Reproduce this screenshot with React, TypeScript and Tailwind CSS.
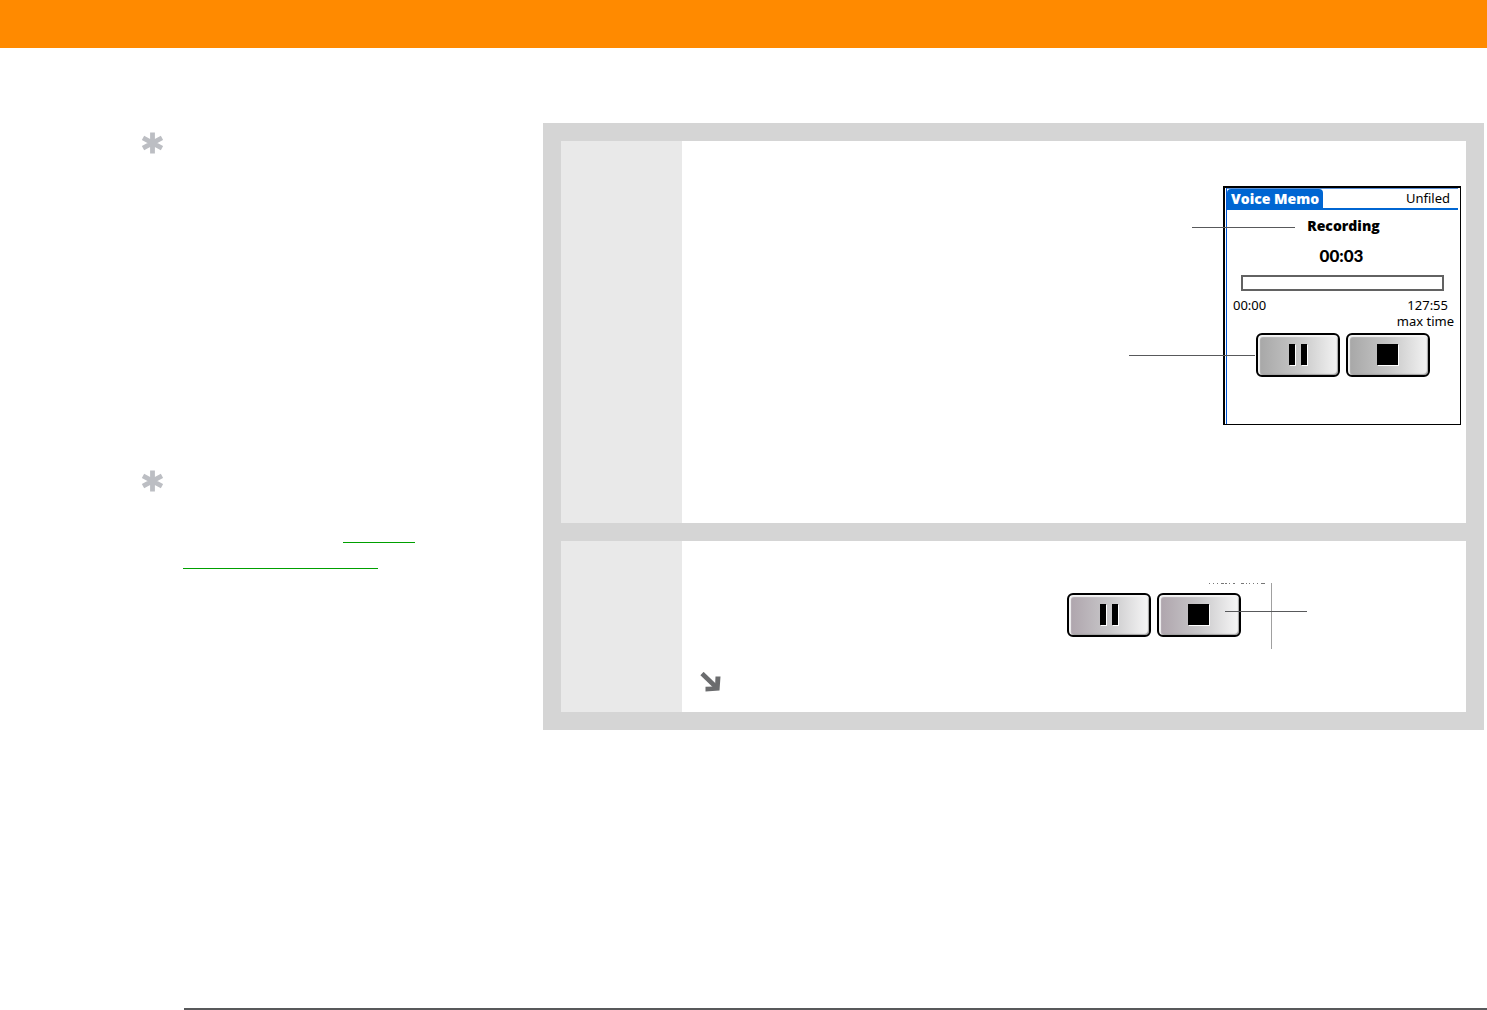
import type { ReactNode } from "react";

function Asterisk() {
  return (
    <svg className="block h-[22px] w-[22px]" viewBox="0 0 22 22" stroke="#bcbec3" strokeWidth="4.8" aria-hidden="true">
      <path d="M11.5 0.5V21.5M2 5.8L21 16.2M21 5.8L2 16.2" fill="none" />
    </svg>
  );
}

function ArrowDownRight() {
  return (
    <svg className="block h-5 w-[22px]" viewBox="0 0 22 20" aria-hidden="true">
      <path d="M2 1.5L17 16" stroke="#6b6c6e" strokeWidth="4.6" fill="none" />
      <path d="M15.5 4.5H20.5L19.5 18.5L5.5 19.5V14.8L15 14.5Z" fill="#6b6c6e" />
    </svg>
  );
}

function DeviceButton({ label, tone, children }: { label: string; tone: string; children: ReactNode }) {
  return (
    <button
      type="button"
      aria-label={label}
      className={`flex h-11 w-[84px] items-center justify-center rounded-md border-2 border-black bg-linear-to-r ${tone} shadow-[inset_1px_1px_1px_1px_#f4f4f4,inset_-1px_-1px_1px_0px_#999]`}
    >
      {children}
    </button>
  );
}

function Controls({ tone }: { tone: string }) {
  return (
    <div className="flex gap-1.5">
      <DeviceButton label="Pause" tone={tone}>
        <svg className="h-[22px] w-5" viewBox="0 0 20 22" shapeRendering="crispEdges" aria-hidden="true">
          <path d="M2 1H8V22H2ZM14 1H20V22H14Z" fill="#fff" />
          <path d="M1 0H7V21H1ZM13 0H19V21H13Z" fill="#000" />
        </svg>
      </DeviceButton>
      <DeviceButton label="Stop" tone={tone}>
        <svg className="h-[22px] w-[22px]" viewBox="0 0 22 22" shapeRendering="crispEdges" aria-hidden="true">
          <path d="M1 1H22V22H1Z" fill="#fff" />
          <path d="M0 0H21V21H0Z" fill="#000" />
        </svg>
      </DeviceButton>
    </div>
  );
}

function VoiceMemo() {
  return (
    <div className="relative h-[239px] w-[238px] border-t-2 border-r border-b border-l-2 border-black bg-white pl-px text-black">
      <div className="h-full border-l border-[#0055d4]">
        <header className="mr-0.5 flex h-[22px] items-start justify-between border-t border-b-2 border-t-[#5c91d8] border-b-[#0066d2]">
          <h1 className="h-5 w-24 rounded-t bg-[#0066d2] pl-1 font-['Open_Sans',sans-serif] text-[14px] leading-5 font-extrabold whitespace-nowrap text-white">
            Voice Memo
          </h1>
          <span className="pr-2 text-[13px] leading-[18px]">Unfiled</span>
        </header>
        <p className="mt-1.5 text-center font-['Open_Sans',sans-serif] text-[14px] leading-5 font-extrabold">Recording</p>
        <p className="mt-2 mr-1 text-center font-['Lato',sans-serif] text-[17px] leading-6 font-black">00:03</p>
        <div className="mt-[7px] mr-4 ml-3.5 h-4 border-2 border-[#626262]" role="progressbar" aria-label="Recording time" aria-valuemin={0} aria-valuemax={7675} aria-valuenow={3} />
        <div className="mt-1.5 flex flex-col text-[13px] leading-4">
          <div className="flex justify-between pr-3 pl-1.5">
            <span>00:00</span>
            <span>127:55</span>
          </div>
          <span className="self-end pr-1.5">max time</span>
        </div>
        <div className="mt-1 pl-[29px]">
          <Controls tone="from-[#a6a6a6] via-[#c6c6c6] to-[#f3f3f3]" />
        </div>
      </div>
      <span className="absolute top-[39px] -left-[33px] h-px w-[103px] bg-[#58595b]" />
      <span className="absolute top-[167px] -left-24 h-px w-[126px] bg-[#58595b]" />
    </div>
  );
}

export default function App() {
  return (
    <div className="flex min-h-screen flex-col bg-white font-['Noto_Sans',sans-serif]">
      <header className="h-12 bg-[#ff8a00]" />
      <main className="flex flex-1 items-start pt-[75px] pr-[3px]">
        <aside className="w-[543px] shrink-0 pt-[9px] pl-[141px]">
          <Asterisk />
          <div className="pt-[316px]">
            <Asterisk />
          </div>
          <nav className="flex w-[274px] flex-col pt-[25px] pl-[42px]">
            <a href="#tip" aria-label="Related topic" className="flex h-[26px] w-[72px] items-end self-end">
              <span className="h-px w-full bg-[#00a000]" />
            </a>
            <a href="#topic" aria-label="Related topic, continued" className="flex h-[26px] w-[195px] items-end">
              <span className="h-px w-full bg-[#00a000]" />
            </a>
          </nav>
        </aside>
        <div className="flex min-w-0 flex-1 flex-col gap-[18px] bg-[#d5d5d5] p-[18px]">
          <section className="flex bg-white">
            <div className="w-[121px] shrink-0 bg-[#e9e9e9]" />
            <div className="flex flex-1 justify-end pt-[45px] pr-[5px] pb-[98px]">
              <VoiceMemo />
            </div>
          </section>
          <section className="flex bg-white">
            <div className="w-[121px] shrink-0 bg-[#e9e9e9]" />
            <div className="flex-1 pt-[42px] pb-5">
              <div className="flex justify-end pr-[194px]">
                <div className="relative h-[66px] w-[205px] border-r border-[#a0a0a0]">
                  <div className="flex justify-end pr-1.5">
                    <svg className="block h-0.5 w-14" viewBox="0 0 56 2" shapeRendering="crispEdges" aria-hidden="true">
                      <path d="M0 .5H1M4 .5H5M8 .5H9M12 .5H15M16 .5H18M20 .5H21M24 .5H26M32 .5H35M37 .5H38M40 .5H41M44 .5H45M48 .5H49M52 .5H56" stroke="#777" />
                    </svg>
                  </div>
                  <div className="pt-2">
                    <Controls tone="from-[#aea4ac] via-[#c8c7c9] to-[#f7f7f7]" />
                  </div>
                  <span className="absolute top-7 left-[158px] h-px w-[82px] bg-[#58595b]" />
                </div>
              </div>
              <div className="pt-[23px] pl-[18px]">
                <ArrowDownRight />
              </div>
            </div>
          </section>
        </div>
      </main>
      <footer className="ml-[184px] h-0.5 bg-[#58595b]" />
    </div>
  );
}
